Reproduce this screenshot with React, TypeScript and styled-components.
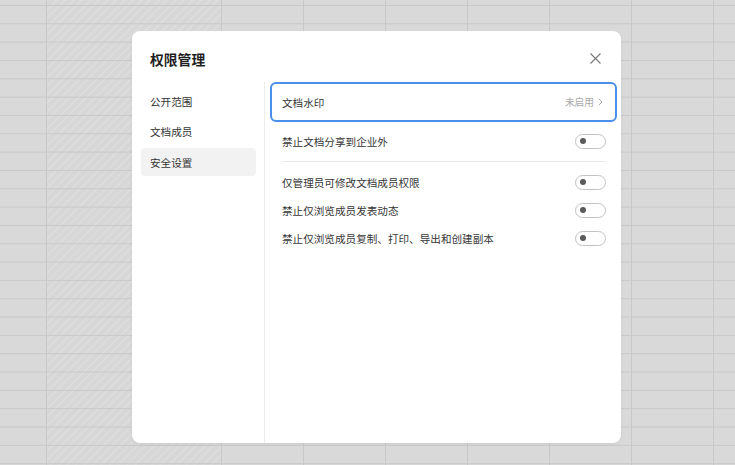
import React from "react";
import styled, { createGlobalStyle } from "styled-components";

const GlobalStyle = createGlobalStyle`
  html, body {
    margin: 0;
    padding: 0;
  }
  body {
    font-family: "Noto Sans CJK SC", "Noto Sans", sans-serif;
    width: 735px;
    height: 465px;
    overflow: hidden;
    background: #d9d9d9;
  }
`;

const ROW_H = 18.33;
const LINE = "#c8c8c8";
const rowLines = `linear-gradient(to bottom, ${LINE} 0, ${LINE} 1px, transparent 1px)`;

const Sheet = styled.div`
  position: relative;
  display: flex;
  width: 735px;
  height: 465px;
  overflow: hidden;
`;

const RowHeader = styled.div`
  width: 46px;
  flex: none;
  border-right: 1px solid ${LINE};
  background: ${rowLines} 0 5px / 100% ${ROW_H}px repeat, #d9d9d9;
`;

const HatchedColumn = styled.div`
  width: 174px;
  flex: none;
  border-right: 1px solid ${LINE};
  background: ${rowLines} 0 5px / 100% ${ROW_H}px repeat,
    repeating-linear-gradient(135deg, #dcdcdc 0 2px, #d7d7d7 2px 6px);
`;

const Cells = styled.div`
  flex: 1;
  background: ${rowLines} 0 5px / 100% ${ROW_H}px repeat,
    linear-gradient(to right, ${LINE} 0, ${LINE} 1px, transparent 1px) 81px 0 / 82px 100% repeat-x,
    #d9d9d9;
`;

const Dialog = styled.div`
  position: absolute;
  left: 132px;
  top: 31px;
  width: 489px;
  height: 412px;
  background: #fff;
  border-radius: 8px;
  box-shadow: 0 1px 3px rgba(0, 0, 0, 0.06);
  display: flex;
  flex-direction: column;
  color: #363636;
`;

const Header = styled.div`
  height: 51px;
  box-sizing: border-box;
  padding: 4px 20px 0 18px;
  display: flex;
  align-items: center;
  justify-content: space-between;
`;

const Title = styled.div`
  font-size: 13.8px;
  font-weight: 700;
  color: #1f1f1f;
`;

const Close = styled.button`
  border: none;
  background: none;
  padding: 0;
  width: 11px;
  height: 11px;
  display: flex;
  cursor: pointer;
`;

const Body = styled.div`
  flex: 1;
  display: flex;
`;

const Nav = styled.div`
  width: 133px;
  flex: none;
  box-sizing: border-box;
  padding: 5px 8px 0 9px;
  border-right: 1px solid #ececec;
  display: flex;
  flex-direction: column;
  gap: 2.6px;
`;

const NavItem = styled.div<{ $active?: boolean }>`
  height: 28px;
  display: flex;
  align-items: center;
  padding-left: 9px;
  border-radius: 4px;
  font-size: 10.6px;
  background: ${(p) => (p.$active ? "#f2f2f2" : "transparent")};
`;

const Content = styled.div`
  flex: 1;
  padding: 0 4px 0 5px;
  display: flex;
  flex-direction: column;
`;

const WatermarkCard = styled.div`
  height: 40px;
  box-sizing: border-box;
  border: 2px solid #4a8fe9;
  border-radius: 6px;
  padding: 0 12px 0 10px;
  display: flex;
  align-items: center;
  justify-content: space-between;
  font-size: 10.6px;
`;

const Status = styled.div`
  display: flex;
  align-items: center;
  gap: 4px;
  font-size: 9.7px;
  color: #aaa;
`;

const SettingRow = styled.div<{ $first?: boolean }>`
  height: 28px;
  margin: ${(p) => (p.$first ? "5px" : "0")} 11px 0 12px;
  display: flex;
  align-items: center;
  justify-content: space-between;
  font-size: 10.6px;
`;

const Divider = styled.div`
  height: 1px;
  background: #e8e8e8;
  margin: 6px 11px 6px 12px;
`;

const Toggle = styled.div<{ $on?: boolean }>`
  position: relative;
  width: 31px;
  height: 15px;
  box-sizing: border-box;
  border: 1px solid #c2c2c2;
  border-radius: 8px;
  background: ${(p) => (p.$on ? "#4a8fe9" : "#fff")};

  &::after {
    content: "";
    position: absolute;
    top: 3.5px;
    left: ${(p) => (p.$on ? "19px" : "4px")};
    width: 6px;
    height: 6px;
    border-radius: 50%;
    background: ${(p) => (p.$on ? "#fff" : "#5a5a5a")};
  }
`;

const navItems = ["公开范围", "文档成员", "安全设置"];

const topSettings = ["禁止文档分享到企业外"];
const memberSettings = [
  "仅管理员可修改文档成员权限",
  "禁止仅浏览成员发表动态",
  "禁止仅浏览成员复制、打印、导出和创建副本",
];

export default function App() {
  return (
    <>
      <GlobalStyle />
      <Sheet>
        <RowHeader />
        <HatchedColumn />
        <Cells />
        <Dialog>
          <Header>
            <Title>权限管理</Title>
            <Close aria-label="关闭">
              <svg width="11" height="11" viewBox="0 0 11 11">
                <path d="M0.5 0.5 L10.5 10.5 M10.5 0.5 L0.5 10.5" stroke="#777" strokeWidth="1.1" fill="none" />
              </svg>
            </Close>
          </Header>
          <Body>
            <Nav>
              {navItems.map((item) => (
                <NavItem key={item} $active={item === "安全设置"}>
                  {item}
                </NavItem>
              ))}
            </Nav>
            <Content>
              <WatermarkCard>
                <span>文档水印</span>
                <Status>
                  未启用
                  <svg width="5" height="8" viewBox="0 0 5 8">
                    <path d="M0.8 0.8 L4 4 L0.8 7.2" stroke="#aaa" strokeWidth="1" fill="none" />
                  </svg>
                </Status>
              </WatermarkCard>
              {topSettings.map((s) => (
                <SettingRow key={s} $first>
                  {s}
                  <Toggle />
                </SettingRow>
              ))}
              <Divider />
              {memberSettings.map((s) => (
                <SettingRow key={s}>
                  {s}
                  <Toggle />
                </SettingRow>
              ))}
            </Content>
          </Body>
        </Dialog>
      </Sheet>
    </>
  );
}
